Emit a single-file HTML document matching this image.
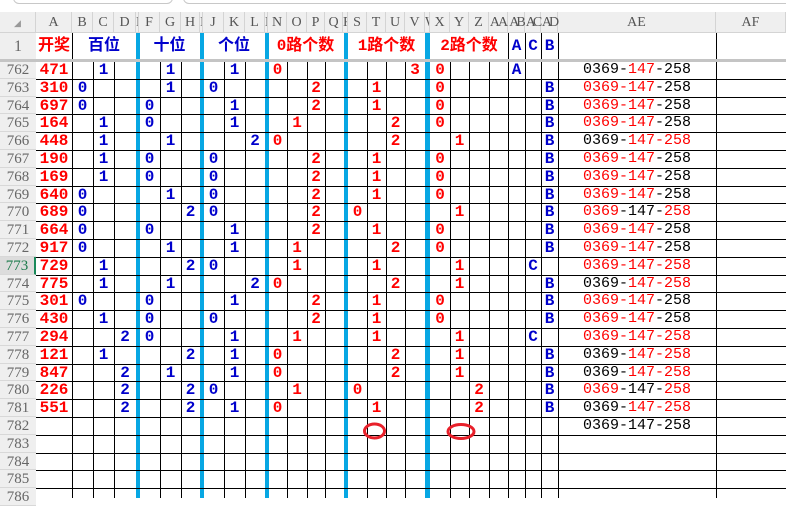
<!DOCTYPE html>
<html><head><meta charset="utf-8"><style>
*{margin:0;padding:0;box-sizing:border-box}
body{width:786px;height:498px;overflow:hidden;background:#fff;position:relative;font-family:"Liberation Mono","Noto Sans CJK SC",monospace}
.a{position:absolute}
.vl{position:absolute;width:1px;background:#000}
.hl{position:absolute;height:1px;background:#000;left:36px;width:750px}
.bar{position:absolute;top:33px;height:465px;width:4px;background:#07a7e3}
.ch{position:absolute;top:12px;height:21px;line-height:22px;text-align:center;color:#555;font-size:14px;border-right:1px solid #d4d4d4;font-family:"Liberation Serif",serif}
.rn{position:absolute;left:0;width:36px;height:17.8px;line-height:18px;text-align:center;color:#666;font-size:15px;background:#efefef;border-bottom:1px solid #d8d8d8;font-family:"Liberation Serif",serif}
.r{position:absolute;left:0;width:786px;height:17.8px;line-height:18px;font-size:16px;font-weight:bold}
.r span{position:absolute;top:0;text-align:center}
.R{color:#f00}.U{color:#0000cc}.K{color:#000}
.A{left:36px;width:36px}.B{left:72px;width:21px}.C{left:93px;width:21px}.D{left:114px;width:22px}
.F{left:139px;width:21px}.G{left:160px;width:21px}.H{left:181px;width:19px}
.J{left:203px;width:21px}.KK{left:224px;width:21px}.L{left:245px;width:20px}
.N{left:268px;width:19px}.O{left:287px;width:20px}.P{left:307px;width:18px}.Q{left:325px;width:18px}
.S{left:348px;width:19px}.T{left:367px;width:19px}.UU{left:386px;width:19px}.V{left:405px;width:20px}
.X{left:430px;width:20px}.Y{left:450px;width:19px}.Z{left:469px;width:20px}.AA{left:489px;width:19px}
.AB{left:508px;width:17px}.AC{left:525px;width:16px}.AD{left:541px;width:17px}
.r span.AE{left:558px;width:158px;font-weight:normal;font-size:15px}
.h1{position:absolute;top:33px;height:26px;line-height:27px;font-size:16px;font-weight:bold;text-align:center;font-family:"Liberation Mono","Noto Sans CJK SC",monospace}
</style></head><body>
<div class="a" style="left:13px;top:-10px;width:160px;height:14px;border:1px solid #c8c8c8;border-radius:6px"></div>
<div class="a" style="left:183px;top:-10px;width:640px;height:14px;border:1px solid #c8c8c8;border-radius:6px"></div>
<div class="a" style="left:0;top:12px;width:786px;height:21px;background:#efefef;border-bottom:1px solid #d4d4d4"></div>
<div class="a" style="left:0;top:33px;width:36px;height:27px;background:#efefef;color:#666;font-size:16px;line-height:27px;text-align:center;font-family:'Liberation Serif',serif">1</div>
<div class="a" style="left:0;top:59px;width:786px;height:3px;background:#c4c4c4;z-index:3"></div>
<div class="ch" style="left:0;width:36px;color:#999;font-size:9px">◢</div>
<div class="ch" style="left:36px;width:36px">A</div><div class="ch" style="left:72px;width:21px">B</div><div class="ch" style="left:93px;width:21px">C</div><div class="ch" style="left:114px;width:22px">D</div><div class="ch" style="left:136px;width:3px;overflow:hidden">E</div>
<div class="ch" style="left:139px;width:21px">F</div><div class="ch" style="left:160px;width:21px">G</div><div class="ch" style="left:181px;width:19px">H</div><div class="ch" style="left:200px;width:3px;overflow:hidden">I</div>
<div class="ch" style="left:203px;width:21px">J</div><div class="ch" style="left:224px;width:21px">K</div><div class="ch" style="left:245px;width:20px">L</div><div class="ch" style="left:265px;width:3px;overflow:hidden">M</div>
<div class="ch" style="left:268px;width:19px">N</div><div class="ch" style="left:287px;width:20px">O</div><div class="ch" style="left:307px;width:18px">P</div><div class="ch" style="left:325px;width:18px">Q</div><div class="ch" style="left:343px;width:5px;overflow:hidden">R</div>
<div class="ch" style="left:348px;width:19px">S</div><div class="ch" style="left:367px;width:19px">T</div><div class="ch" style="left:386px;width:19px">U</div><div class="ch" style="left:405px;width:20px">V</div><div class="ch" style="left:425px;width:5px;overflow:hidden">W</div>
<div class="ch" style="left:430px;width:20px">X</div><div class="ch" style="left:450px;width:19px">Y</div><div class="ch" style="left:469px;width:20px">Z</div><div class="ch" style="left:489px;width:19px;letter-spacing:-2px">AA</div>
<div class="ch" style="left:508px;width:17px;letter-spacing:-3px">AB</div><div class="ch" style="left:525px;width:16px;letter-spacing:-3px">AC</div><div class="ch" style="left:541px;width:17px;letter-spacing:-3px">AD</div>
<div class="ch" style="left:558px;width:158px">AE</div><div class="ch" style="left:716px;width:70px">AF</div>

<div class="h1" style="left:36px;width:36px;color:#f00">开奖</div>
<div class="h1" style="left:72px;width:64px;color:#0000cc">百位</div>
<div class="h1" style="left:139px;width:61px;color:#0000cc">十位</div>
<div class="h1" style="left:203px;width:62px;color:#0000cc">个位</div>
<div class="h1" style="left:268px;width:75px;color:#f00">0路个数</div>
<div class="h1" style="left:348px;width:77px;color:#f00">1路个数</div>
<div class="h1" style="left:430px;width:78px;color:#f00">2路个数</div>
<div class="h1" style="left:508px;width:17px;color:#0000cc">A</div>
<div class="h1" style="left:525px;width:16px;color:#0000cc">C</div>
<div class="h1" style="left:541px;width:17px;color:#0000cc">B</div>

<div class="vl" style="left:72px;top:33px;height:465px"></div>
<div class="vl" style="left:508px;top:33px;height:465px"></div>
<div class="vl" style="left:525px;top:33px;height:465px"></div>
<div class="vl" style="left:541px;top:33px;height:465px"></div>
<div class="vl" style="left:558px;top:33px;height:465px"></div>
<div class="vl" style="left:716px;top:33px;height:465px"></div>
<div class="vl" style="left:93px;top:61px;height:437px"></div><div class="vl" style="left:114px;top:61px;height:437px"></div>
<div class="vl" style="left:160px;top:61px;height:437px"></div><div class="vl" style="left:181px;top:61px;height:437px"></div>
<div class="vl" style="left:224px;top:61px;height:437px"></div><div class="vl" style="left:245px;top:61px;height:437px"></div>
<div class="vl" style="left:287px;top:61px;height:437px"></div><div class="vl" style="left:307px;top:61px;height:437px"></div><div class="vl" style="left:325px;top:61px;height:437px"></div>
<div class="vl" style="left:367px;top:61px;height:437px"></div><div class="vl" style="left:386px;top:61px;height:437px"></div><div class="vl" style="left:405px;top:61px;height:437px"></div>
<div class="vl" style="left:450px;top:61px;height:437px"></div><div class="vl" style="left:469px;top:61px;height:437px"></div><div class="vl" style="left:489px;top:61px;height:437px"></div>
<div class="bar" style="left:136px"></div><div class="bar" style="left:200px"></div><div class="bar" style="left:265px"></div><div class="bar" style="left:344px"></div><div class="bar" style="left:425px;width:5px"></div>

<div class="hl" style="top:78.8px"></div><div class="hl" style="top:96.6px"></div><div class="hl" style="top:114.4px"></div><div class="hl" style="top:132.2px"></div><div class="hl" style="top:150px"></div><div class="hl" style="top:167.8px"></div><div class="hl" style="top:185.6px"></div><div class="hl" style="top:203.4px"></div><div class="hl" style="top:221.2px"></div><div class="hl" style="top:239px"></div><div class="hl" style="top:256.8px"></div><div class="hl" style="top:274.6px"></div><div class="hl" style="top:292.4px"></div><div class="hl" style="top:310.2px"></div><div class="hl" style="top:328px"></div><div class="hl" style="top:345.8px"></div><div class="hl" style="top:363.6px"></div><div class="hl" style="top:381.4px"></div><div class="hl" style="top:399.2px"></div><div class="hl" style="top:417px"></div><div class="hl" style="top:434.8px"></div><div class="hl" style="top:452.6px"></div><div class="hl" style="top:470.4px"></div><div class="hl" style="top:488.2px"></div>

<div class="rn" style="top:61px">762</div><div class="rn" style="top:78.8px">763</div><div class="rn" style="top:96.6px">764</div><div class="rn" style="top:114.4px">765</div><div class="rn" style="top:132.2px">766</div><div class="rn" style="top:150px">767</div><div class="rn" style="top:167.8px">768</div><div class="rn" style="top:185.6px">769</div><div class="rn" style="top:203.4px">770</div><div class="rn" style="top:221.2px">771</div><div class="rn" style="top:239px">772</div><div class="rn" style="top:256.8px;background:#dcdcdc;color:#1a7a4a;border-right:2px solid #1a8a5a">773</div><div class="rn" style="top:274.6px">774</div><div class="rn" style="top:292.4px">775</div><div class="rn" style="top:310.2px">776</div><div class="rn" style="top:328px">777</div><div class="rn" style="top:345.8px">778</div><div class="rn" style="top:363.6px">779</div><div class="rn" style="top:381.4px">780</div><div class="rn" style="top:399.2px">781</div><div class="rn" style="top:417px">782</div><div class="rn" style="top:434.8px">783</div><div class="rn" style="top:452.6px">784</div><div class="rn" style="top:470.4px">785</div><div class="rn" style="top:488.2px">786</div>

<div class="r" style="top:61px"><span class="A R">471</span><span class="C U">1</span><span class="G U">1</span><span class="KK U">1</span><span class="N R">0</span><span class="V R">3</span><span class="X R">0</span><span class="AB U">A</span><span class="AE">0369-<b class="R" style="font-weight:normal">147</b>-258</span></div>
<div class="r" style="top:78.8px"><span class="A R">310</span><span class="B U">0</span><span class="G U">1</span><span class="J U">0</span><span class="P R">2</span><span class="T R">1</span><span class="X R">0</span><span class="AD U">B</span><span class="AE"><i class="R" style="font-style:normal">0369-147</i>-258</span></div>
<div class="r" style="top:96.6px"><span class="A R">697</span><span class="B U">0</span><span class="F U">0</span><span class="KK U">1</span><span class="P R">2</span><span class="T R">1</span><span class="X R">0</span><span class="AD U">B</span><span class="AE"><i class="R" style="font-style:normal">0369-147</i>-258</span></div>
<div class="r" style="top:114.4px"><span class="A R">164</span><span class="C U">1</span><span class="F U">0</span><span class="KK U">1</span><span class="O R">1</span><span class="UU R">2</span><span class="X R">0</span><span class="AD U">B</span><span class="AE"><i class="R" style="font-style:normal">0369-147</i>-258</span></div>
<div class="r" style="top:132.2px"><span class="A R">448</span><span class="C U">1</span><span class="G U">1</span><span class="L U">2</span><span class="N R">0</span><span class="UU R">2</span><span class="Y R">1</span><span class="AD U">B</span><span class="AE">0369-<i class="R" style="font-style:normal">147-258</i></span></div>
<div class="r" style="top:150px"><span class="A R">190</span><span class="C U">1</span><span class="F U">0</span><span class="J U">0</span><span class="P R">2</span><span class="T R">1</span><span class="X R">0</span><span class="AD U">B</span><span class="AE"><i class="R" style="font-style:normal">0369-147</i>-258</span></div>
<div class="r" style="top:167.8px"><span class="A R">169</span><span class="C U">1</span><span class="F U">0</span><span class="J U">0</span><span class="P R">2</span><span class="T R">1</span><span class="X R">0</span><span class="AD U">B</span><span class="AE"><i class="R" style="font-style:normal">0369-147</i>-258</span></div>
<div class="r" style="top:185.6px"><span class="A R">640</span><span class="B U">0</span><span class="G U">1</span><span class="J U">0</span><span class="P R">2</span><span class="T R">1</span><span class="X R">0</span><span class="AD U">B</span><span class="AE"><i class="R" style="font-style:normal">0369-147</i>-258</span></div>
<div class="r" style="top:203.4px"><span class="A R">689</span><span class="B U">0</span><span class="H U">2</span><span class="J U">0</span><span class="P R">2</span><span class="S R">0</span><span class="Y R">1</span><span class="AD U">B</span><span class="AE"><i class="R" style="font-style:normal">0369</i>-147-<i class="R" style="font-style:normal">258</i></span></div>
<div class="r" style="top:221.2px"><span class="A R">664</span><span class="B U">0</span><span class="F U">0</span><span class="KK U">1</span><span class="P R">2</span><span class="T R">1</span><span class="X R">0</span><span class="AD U">B</span><span class="AE"><i class="R" style="font-style:normal">0369-147</i>-258</span></div>
<div class="r" style="top:239px"><span class="A R">917</span><span class="B U">0</span><span class="G U">1</span><span class="KK U">1</span><span class="O R">1</span><span class="UU R">2</span><span class="X R">0</span><span class="AD U">B</span><span class="AE"><i class="R" style="font-style:normal">0369-147</i>-258</span></div>
<div class="r" style="top:256.8px"><span class="A R">729</span><span class="C U">1</span><span class="H U">2</span><span class="J U">0</span><span class="O R">1</span><span class="T R">1</span><span class="Y R">1</span><span class="AC U">C</span><span class="AE R">0369-147-258</span></div>
<div class="r" style="top:274.6px"><span class="A R">775</span><span class="C U">1</span><span class="G U">1</span><span class="L U">2</span><span class="N R">0</span><span class="UU R">2</span><span class="Y R">1</span><span class="AD U">B</span><span class="AE">0369-<i class="R" style="font-style:normal">147-258</i></span></div>
<div class="r" style="top:292.4px"><span class="A R">301</span><span class="B U">0</span><span class="F U">0</span><span class="KK U">1</span><span class="P R">2</span><span class="T R">1</span><span class="X R">0</span><span class="AD U">B</span><span class="AE"><i class="R" style="font-style:normal">0369-147</i>-258</span></div>
<div class="r" style="top:310.2px"><span class="A R">430</span><span class="C U">1</span><span class="F U">0</span><span class="J U">0</span><span class="P R">2</span><span class="T R">1</span><span class="X R">0</span><span class="AD U">B</span><span class="AE"><i class="R" style="font-style:normal">0369-147</i>-258</span></div>
<div class="r" style="top:328px"><span class="A R">294</span><span class="D U">2</span><span class="F U">0</span><span class="KK U">1</span><span class="O R">1</span><span class="T R">1</span><span class="Y R">1</span><span class="AC U">C</span><span class="AE R">0369-147-258</span></div>
<div class="r" style="top:345.8px"><span class="A R">121</span><span class="C U">1</span><span class="H U">2</span><span class="KK U">1</span><span class="N R">0</span><span class="UU R">2</span><span class="Y R">1</span><span class="AD U">B</span><span class="AE">0369-<i class="R" style="font-style:normal">147-258</i></span></div>
<div class="r" style="top:363.6px"><span class="A R">847</span><span class="D U">2</span><span class="G U">1</span><span class="KK U">1</span><span class="N R">0</span><span class="UU R">2</span><span class="Y R">1</span><span class="AD U">B</span><span class="AE">0369-<i class="R" style="font-style:normal">147-258</i></span></div>
<div class="r" style="top:381.4px"><span class="A R">226</span><span class="D U">2</span><span class="H U">2</span><span class="J U">0</span><span class="O R">1</span><span class="S R">0</span><span class="Z R">2</span><span class="AD U">B</span><span class="AE"><i class="R" style="font-style:normal">0369</i>-147-<i class="R" style="font-style:normal">258</i></span></div>
<div class="r" style="top:399.2px"><span class="A R">551</span><span class="D U">2</span><span class="H U">2</span><span class="KK U">1</span><span class="N R">0</span><span class="T R">1</span><span class="Z R">2</span><span class="AD U">B</span><span class="AE">0369-<i class="R" style="font-style:normal">147-258</i></span></div>
<div class="r" style="top:417px"><span class="AE">0369-147-258</span></div>

<svg class="a" style="left:0;top:0" width="786" height="498"><ellipse cx="374.5" cy="431" rx="10" ry="7" fill="none" stroke="#e8202a" stroke-width="3"/><ellipse cx="461" cy="431.5" rx="13" ry="7" fill="none" stroke="#e8202a" stroke-width="3"/></svg>
</body></html>
